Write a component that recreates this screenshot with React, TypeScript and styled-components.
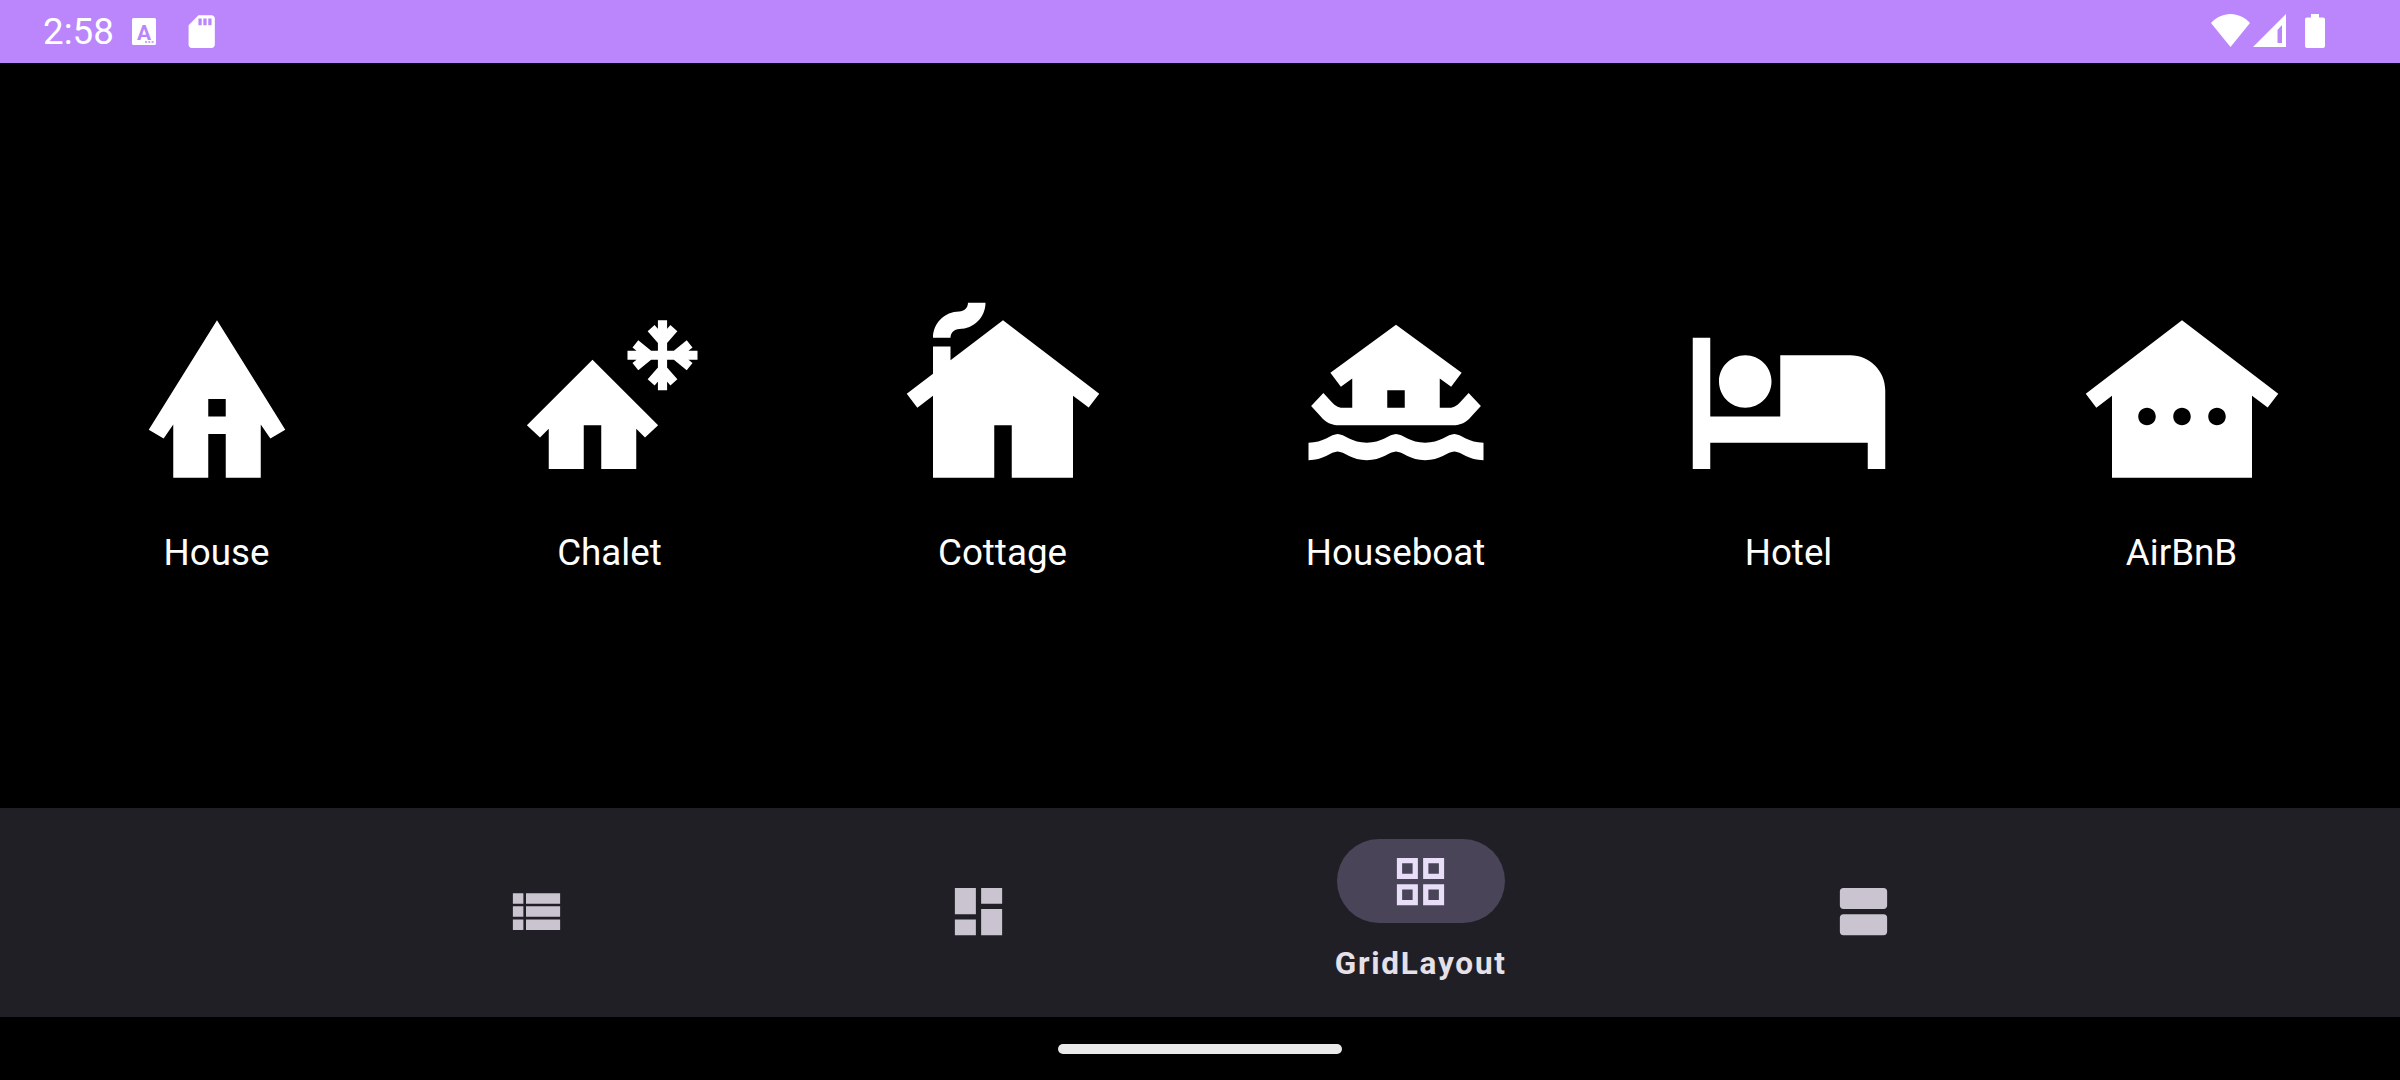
import React from "react";
import styled, { createGlobalStyle } from "styled-components";

const Global = createGlobalStyle`
  html, body { margin: 0; padding: 0; background: #000; }
  * { box-sizing: border-box; }
`;

const Screen = styled.div`
  width: 2400px;
  height: 1080px;
  display: flex;
  flex-direction: column;
  background: #000;
  font-family: Roboto, "Liberation Sans", sans-serif;
  overflow: hidden;
`;

const StatusBar = styled.header`
  flex: 0 0 63px;
  display: flex;
  align-items: center;
  justify-content: space-between;
  padding: 0 75px 0 43px;
  background: #bb86fc;
  color: #fff;
`;

const StatusGroup = styled.div`
  display: flex;
  align-items: center;
`;

const SystemIcons = styled(StatusGroup)`
  margin-bottom: 2px;
`;

const Clock = styled.span`
  font-size: 36.75px;
  line-height: 43px;
  font-weight: 400;
  margin-right: 18px;
`;

const StatusGlyph = styled.svg<{ $gap?: number }>`
  display: block;
  flex: none;
  fill: #fff;
  margin-left: ${(p) => p.$gap ?? 0}px;
`;

const KeyLetter = styled.text`
  font-family: Roboto, "Liberation Sans", sans-serif;
  font-size: 21px;
  font-weight: 700;
  fill: #bb86fc;
  text-anchor: middle;
`;

const KeyDots = styled.path`
  fill: #bb86fc;
`;

const SignalSlot = styled.path`
  fill: #bb86fc;
`;

const Content = styled.main`
  flex: 1;
  display: grid;
  grid-template-columns: repeat(6, 393px);
  align-content: center;
  padding: 0 20px 3px;
`;

const Lodging = styled.div`
  display: flex;
  flex-direction: column;
  align-items: center;
`;

const LodgingIcon = styled.svg`
  display: block;
  width: 210px;
  height: 210px;
  fill: #fff;
  fill-rule: evenodd;
`;

const FlakeStroke = styled.path`
  fill: none;
  stroke: #fff;
  stroke-width: 1.05;
`;

const LodgingLabel = styled.span`
  margin-top: 27px;
  font-size: 36.75px;
  line-height: 43px;
  font-weight: 400;
  color: #fff;
`;

const NavBar = styled.nav`
  flex: 0 0 209px;
  display: grid;
  grid-template-columns: repeat(4, 442.3px);
  padding: 0 315px 2px;
  background: #211f26;
`;

const NavItem = styled.div<{ $active?: boolean }>`
  display: flex;
  flex-direction: column;
  align-items: center;
  justify-content: ${(p) => (p.$active ? "flex-start" : "center")};
  padding-top: ${(p) => (p.$active ? "31px" : "0")};
`;

const NavPill = styled.div`
  width: 168px;
  height: 84px;
  border-radius: 42px;
  display: flex;
  align-items: center;
  justify-content: center;
  background: #4a4458;
`;

const NavIcon = styled.svg<{ $active?: boolean }>`
  display: block;
  width: 63px;
  height: 63px;
  fill: ${(p) => (p.$active ? "#e8def8" : "#cac4d0")};
  fill-rule: evenodd;
`;

const NavLabel = styled.span`
  margin-top: 23px;
  font-size: 31.5px;
  line-height: 36px;
  font-weight: 700;
  letter-spacing: 1.75px;
  color: #e6e0e9;
`;

const GestureArea = styled.div`
  flex: 0 0 63px;
  display: flex;
  align-items: center;
  justify-content: center;
  background: #000;
`;

const GestureHandle = styled.div`
  width: 284px;
  height: 10px;
  border-radius: 5px;
  background: #e9e9e9;
`;

const lodgings: { label: string; icon: React.ReactNode }[] = [
  {
    label: "House",
    icon: <path d="M12 3 4.2 15.5 5.9 16.5 7 14.9V21H11V16H13V21H17V14.9L18.1 16.5 19.8 15.5ZM11 12H13V14H11Z" />,
  },
  {
    label: "Chalet",
    icon: (
      <>
        <path d="M10 7.5 2.5 15 4 16.4 5 15.4V20H9V15H11V20H15V15.4L16 16.4 17.5 15Z" />
        <FlakeStroke d="M18 3V11M14 7H22M16.7 3.9 18 5.4 19.3 3.9M16.7 10.1 18 8.6 19.3 10.1M14.9 5.7 16.5 7 14.9 8.3M21.1 5.7 19.5 7 21.1 8.3" />
      </>
    ),
  },
  {
    label: "Cottage",
    icon: (
      <path d="M12,3L6,7.58V6H4v3.11L1,11.4l1.21,1.59L4,11.62V21h7v-6h2v6h7v-9.38l1.79,1.36L23,11.4L12,3z M10,1c0,1.66-1.34,3-3,3C6.45,4,6,4.45,6,5H4c0-1.66,1.34-3,3-3c0.55,0,1-0.45,1-1H10z" />
    ),
  },
  {
    label: "Houseboat",
    icon: (
      <path d="M12 3.5 4.5 9 5.7 10.6 7 9.65V13H5.9C5.3 13 5 12.7 4.7 12.4L3.7 11.3 2.3 12.8 3.4 14C4 14.7 4.6 15 5.5 15H18.5C19.4 15 20 14.7 20.6 14L21.7 12.8 20.3 11.3 19.3 12.4C19 12.7 18.7 13 18.1 13H17V9.65L18.3 10.6 19.5 9ZM11 11H13V13H11ZM2 19C3.67 19 4.61 18 5.33 18 6.05 18 6.99 19 8.66 19 10.33 19 11.28 18 12 18 12.72 18 13.66 19 15.33 19 17 19 17.95 18 18.67 18 19.39 18 20.33 19 22 19V17C20.33 17 19.39 16 18.67 16 17.95 16 17 17 15.33 17 13.66 17 12.72 16 12 16 11.28 16 10.33 17 8.66 17 6.99 17 6.05 16 5.33 16 4.61 16 3.67 17 2 17Z" />
    ),
  },
  {
    label: "Hotel",
    icon: (
      <path d="M7 13c1.66 0 3-1.34 3-3S8.66 7 7 7s-3 1.34-3 3 1.34 3 3 3zm12-6h-8v7H3V5H1v15h2v-3h18v3h2v-9c0-2.21-1.79-4-4-4z" />
    ),
  },
  {
    label: "AirBnB",
    icon: (
      <path d="M1,11.4l1.21,1.59L4,11.62V21h16v-9.38l1.79,1.36L23,11.4L12,3L1,11.4z M8,15c-0.55,0-1-0.45-1-1s0.45-1,1-1s1,0.45,1,1S8.55,15,8,15z M12,15c-0.55,0-1-0.45-1-1s0.45-1,1-1s1,0.45,1,1S12.55,15,12,15z M16,15c-0.55,0-1-0.45-1-1s0.45-1,1-1s1,0.45,1,1S16.55,15,16,15z" />
    ),
  },
];

export default function App() {
  return (
    <Screen>
      <Global />
      <StatusBar>
        <StatusGroup>
          <Clock>2:58</Clock>
          <StatusGlyph width={24} height={27} viewBox="0 0 24 27">
            <rect width="24" height="27" rx="1.5" />
            <KeyLetter x="12" y="22">A</KeyLetter>
            <KeyDots d="M13 23.3h2v1.5h-2zM16.3 23.3h2v1.5h-2zM19.6 23.3h2v1.5h-2z" />
          </StatusGlyph>
          <StatusGlyph $gap={26} width={39.4} height={39.4} viewBox="0 0 24 24" fillRule="evenodd">
            <path d="M18 2h-8L4.02 8 4 20c0 1.1.9 2 2 2h12c1.1 0 2-.9 2-2V4c0-1.1-.9-2-2-2zm-6 6h-2V4h2v4zm3 0h-2V4h2v4zm3 0h-2V4h2v4z" />
          </StatusGlyph>
        </StatusGroup>
        <SystemIcons>
          <StatusGlyph width={39} height={33} viewBox="0 0 39 33">
            <path d="M19.5 33 0 9C5 3.5 12 0 19.5 0S34 3.5 39 9Z" />
          </StatusGlyph>
          <StatusGlyph $gap={3} width={33} height={33} viewBox="0 0 33 33">
            <path d="M0 33 33 0V33Z" />
            <SignalSlot d="M24.5 16 29 11V29H24.5Z" />
          </StatusGlyph>
          <StatusGlyph $gap={19} width={20} height={34} viewBox="0 0 20 34">
            <path d="M6 0H14V3.5H18C19.1 3.5 20 4.4 20 5.5V32C20 33.1 19.1 34 18 34H2C.9 34 0 33.1 0 32V5.5C0 4.4.9 3.5 2 3.5H6Z" />
          </StatusGlyph>
        </SystemIcons>
      </StatusBar>

      <Content>
        {lodgings.map((l) => (
          <Lodging key={l.label}>
            <LodgingIcon viewBox="0 0 24 24">{l.icon}</LodgingIcon>
            <LodgingLabel>{l.label}</LodgingLabel>
          </Lodging>
        ))}
      </Content>

      <NavBar>
        <NavItem>
          <NavIcon viewBox="0 0 24 24">
            <path d="M3 14h4v-4H3v4zm0 5h4v-4H3v4zM3 9h4V5H3v4zm5 5h13v-4H8v4zm0 5h13v-4H8v4zM8 5v4h13V5H8z" />
          </NavIcon>
        </NavItem>
        <NavItem>
          <NavIcon viewBox="0 0 24 24">
            <path d="M3 13h8V3H3v10zm0 8h8v-6H3v6zm10 0h8V11h-8v10zm0-18v6h8V3h-8z" />
          </NavIcon>
        </NavItem>
        <NavItem $active>
          <NavPill>
            <NavIcon $active viewBox="0 0 24 24">
              <path d="M3 3v8h8V3H3zm6 6H5V5h4v4zm-6 4v8h8v-8H3zm6 6H5v-4h4v4zm4-16v8h8V3h-8zm6 6h-4V5h4v4zm-6 4v8h8v-8h-8zm6 6h-4v-4h4v4z" />
            </NavIcon>
          </NavPill>
          <NavLabel>GridLayout</NavLabel>
        </NavItem>
        <NavItem>
          <NavIcon viewBox="0 0 24 24">
            <rect x="3" y="3" width="18" height="8" rx="1.4" />
            <rect x="3" y="13" width="18" height="8" rx="1.4" />
          </NavIcon>
        </NavItem>
      </NavBar>

      <GestureArea>
        <GestureHandle />
      </GestureArea>
    </Screen>
  );
}
